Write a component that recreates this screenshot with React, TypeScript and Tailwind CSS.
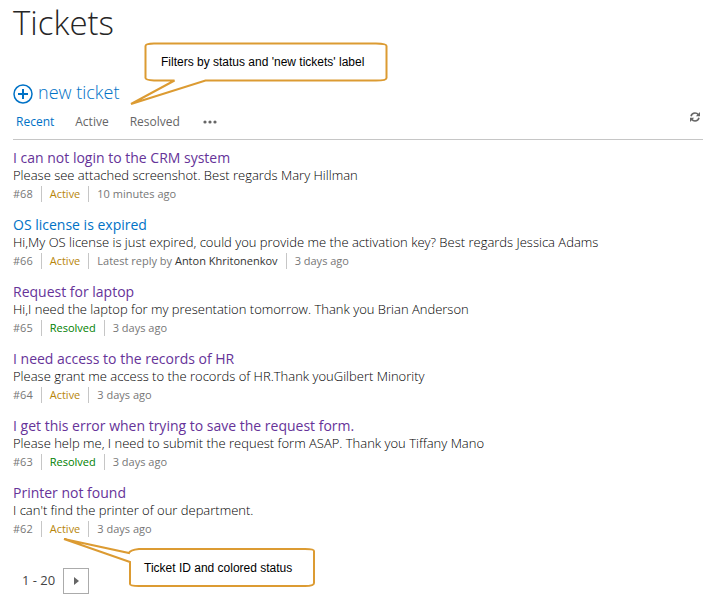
import type { ReactNode } from "react";

type Status = "Active" | "Resolved";

interface Ticket {
  id: number;
  title: string;
  body: string;
  status: Status;
  age: string;
  replyBy?: string;
  unread?: boolean;
}

const tickets: Ticket[] = [
  { id: 68, title: "I can not login to the CRM system", body: "Please see attached screenshot. Best regards Mary Hillman", status: "Active", age: "10 minutes ago" },
  { id: 66, title: "OS license is expired", body: "Hi,My OS license is just expired, could you provide me the activation key? Best regards Jessica Adams", status: "Active", age: "3 days ago", replyBy: "Anton Khritonenkov", unread: true },
  { id: 65, title: "Request for laptop", body: "Hi,I need the laptop for my presentation tomorrow. Thank you Brian Anderson", status: "Resolved", age: "3 days ago" },
  { id: 64, title: "I need access to the records of HR", body: "Please grant me access to the rocords of HR.Thank youGilbert Minority", status: "Active", age: "3 days ago" },
  { id: 63, title: "I get this error when trying to save the request form.", body: "Please help me, I need to submit the request form ASAP. Thank you Tiffany Mano", status: "Resolved", age: "3 days ago" },
  { id: 62, title: "Printer not found", body: "I can't find the printer of our department.", status: "Active", age: "3 days ago" },
];

function Meta({ children }: { children: ReactNode }) {
  return <span className="border-l border-[#c6c6c6] pl-2">{children}</span>;
}

function TicketRow({ ticket }: { ticket: Ticket }) {
  return (
    <li className="pb-[13px]">
      <h2 className="text-[14px] leading-[19px]">
        <a href="#" className={ticket.unread ? "text-[#0072c6]" : "text-[#663399]"}>{ticket.title}</a>
      </h2>
      <p className="text-[13px] leading-4 font-light text-black">{ticket.body}</p>
      <div className="mt-[3px] flex gap-2 text-[11px] leading-4 text-[#777]">
        <span>#{ticket.id}</span>
        <Meta>
          <span className={ticket.status === "Active" ? "text-[#b8860b]" : "text-[#008000]"}>{ticket.status}</span>
        </Meta>
        {ticket.replyBy && (
          <Meta>
            Latest reply by <span className="text-[#333]">{ticket.replyBy}</span>
          </Meta>
        )}
        <Meta>{ticket.age}</Meta>
      </div>
    </li>
  );
}

export default function App() {
  return (
    <main className="relative bg-white pr-5 pl-[13px] font-['Open_Sans','Noto_Sans',sans-serif]">
      <h1 className="text-[33px] leading-[45px] font-light text-[#262626]">Tickets</h1>

      <a href="#" className="mt-[35px] flex w-fit items-center gap-[5px] text-[18px] leading-6 font-light text-[#0072c6]">
        <svg className="mt-1 size-5" viewBox="0 0 20 20" fill="none" stroke="currentColor" aria-hidden="true">
          <circle cx="10" cy="10" r="9" strokeWidth="1.5" />
          <path d="M10 5v10M5 10h10" strokeWidth="2" />
        </svg>
        new ticket
      </a>

      <nav className="flex h-9 items-start border-b border-[#c6c6c6] pt-2 pr-[3px] pl-[3px] text-[12px] leading-5 text-[#666]">
        <div className="flex flex-1 gap-[21px]">
          <a href="#" className="text-[#0072c6]">Recent</a>
          <a href="#">Active</a>
          <a href="#">Resolved</a>
          <button type="button" aria-label="More filters" className="flex h-5 items-center">
            <svg className="h-1 w-4" viewBox="0 0 16 4" fill="currentColor" aria-hidden="true">
              <circle cx="4" cy="2" r="1.600" />
              <circle cx="9" cy="2" r="1.600" />
              <circle cx="14" cy="2" r="1.600" />
            </svg>
          </button>
        </div>
        <button type="button" aria-label="Refresh">
          <svg className="size-[10px]" viewBox="0 0 10 10" fill="none" stroke="#666" strokeWidth="1.5" aria-hidden="true">
            <path d="M1 4.200C1.500 2.200 3 1 5 1c1.500 0 2.600.7 3.400 1.800M9 5.800C8.500 7.800 7 9 5 9c-1.500 0-2.600-.7-3.400-1.800" />
            <path d="M10 0v4.300H5.800zM0 10V5.700h4.200z" fill="#666" stroke="none" />
          </svg>
        </button>
      </nav>

      <ul className="pt-2">
        {tickets.map((ticket) => (
          <TicketRow key={ticket.id} ticket={ticket} />
        ))}
      </ul>

      <div className="mt-[18px] flex items-center gap-2 pb-4 pl-[9px] text-[13px] text-[#444]">
        <span>1 - 20</span>
        <button type="button" aria-label="Next page" className="flex size-[26px] items-center justify-center border border-[#ababab]">
          <svg className="h-2 w-[5px]" viewBox="0 0 5 8" fill="#666" aria-hidden="true">
            <path d="M0 0l5 4-5 4z" />
          </svg>
        </button>
      </div>

      <div className="absolute top-[41px] left-[128px] h-[66px] w-[260px]">
        <svg className="absolute inset-0 size-full" viewBox="0 0 260 66" fill="white" stroke="#dc9b32" strokeWidth="2" aria-hidden="true">
          <path d="M26 2.500H248Q258.500 2.500 258.500 5V37Q258.500 39.500 248 39.500H77.500L3 63 46.500 39.500H26Q17.500 39 17.500 37V5Q17.500 2.500 26 2.500Z" />
        </svg>
        <p className="relative pt-[12px] pl-[33px] font-['Liberation_Sans',sans-serif] text-[12px] leading-[18px] whitespace-nowrap text-black">
          Filters by status and 'new tickets' label
        </p>
      </div>

      <div className="absolute top-[537px] left-[63px] h-[52px] w-[254px]">
        <svg className="absolute inset-0 size-full" viewBox="0 0 254 52" fill="white" stroke="#dc9b32" strokeWidth="2" aria-hidden="true">
          <path d="M1 2L66 16Q67 13 76 12H242Q251 12 251 14V46Q251 49 242 49H76Q67 49 67 47V25Z" />
        </svg>
        <p className="relative pt-[22px] pl-[81px] font-['Liberation_Sans',sans-serif] text-[12px] leading-[18px] whitespace-nowrap text-black">
          Ticket ID and colored status
        </p>
      </div>
    </main>
  );
}
